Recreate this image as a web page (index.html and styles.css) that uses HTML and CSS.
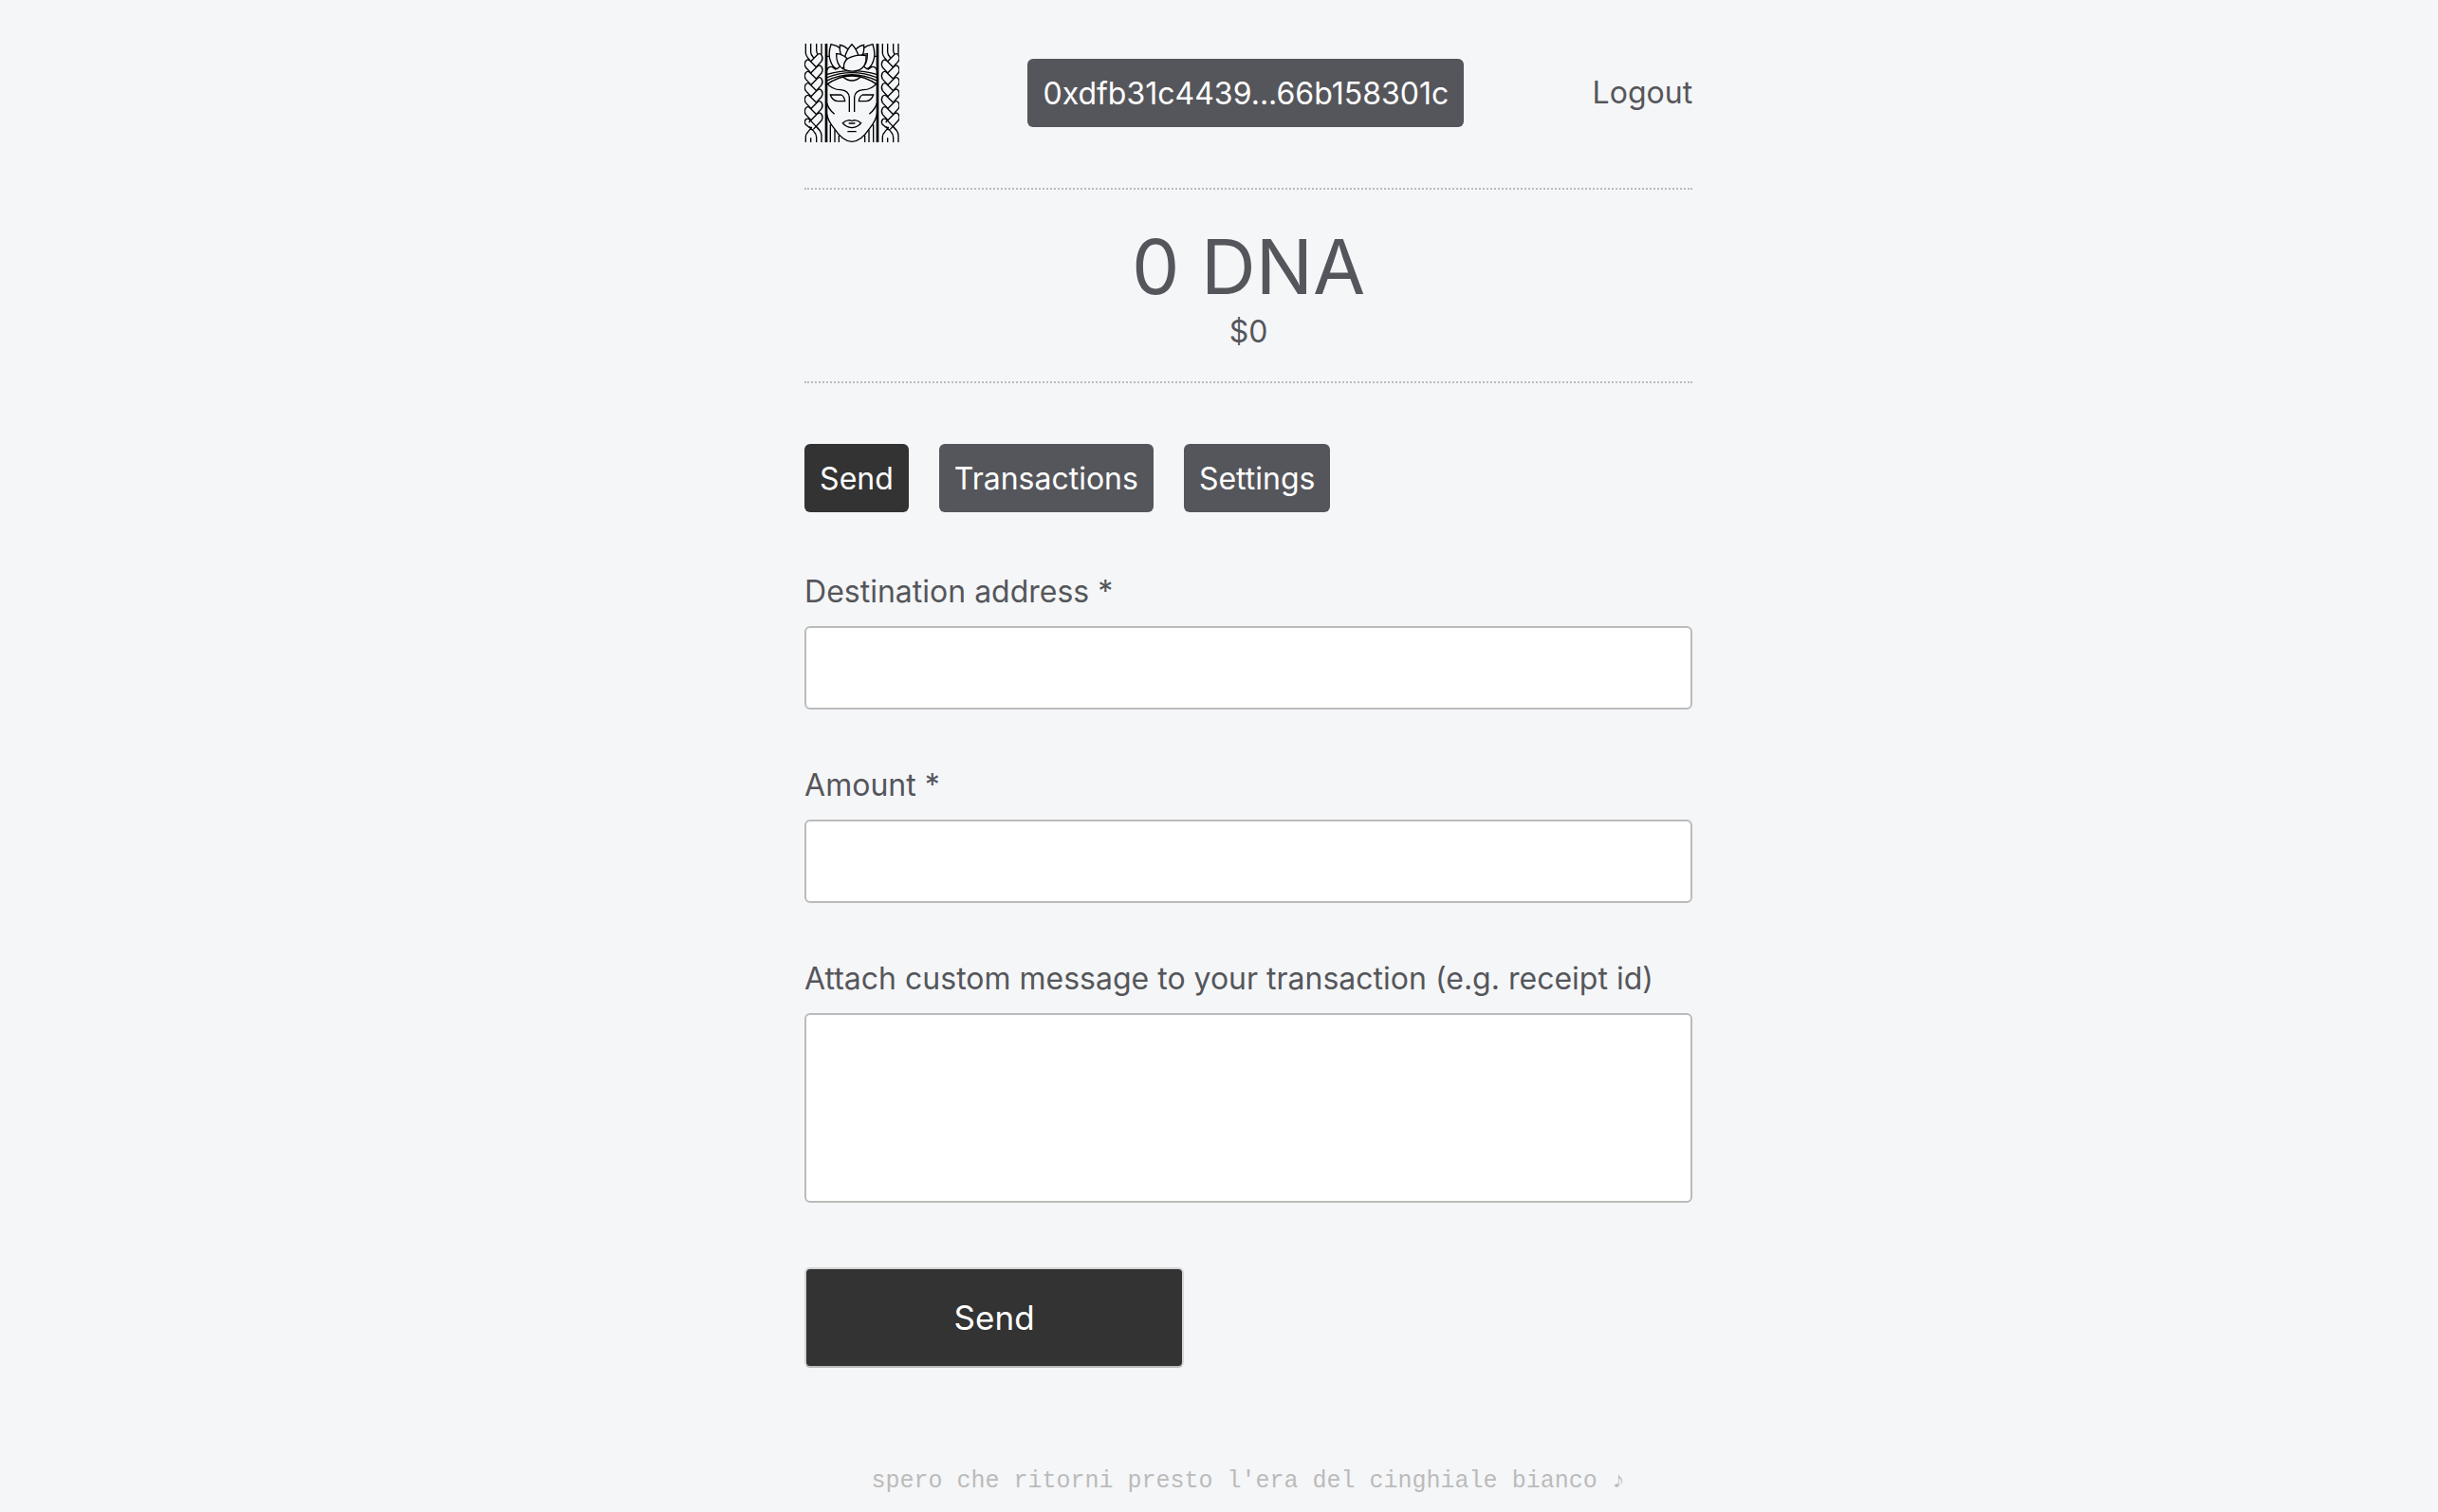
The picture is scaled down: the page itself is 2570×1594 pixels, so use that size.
FILE: index.html
```html
<!DOCTYPE html>
<html lang="en">
<head>
<meta charset="utf-8">
<meta name="viewport" content="width=device-width, initial-scale=1">
<title>Wallet</title>
<link rel="stylesheet" href="styles.css">
</head>
<body>
<main class="wallet">
  <header class="topbar">
    <a class="logo" href="#" aria-label="Home">
      <svg class="logo-art" viewBox="24 18 300 312" fill="none" stroke="#000" stroke-width="4" aria-hidden="true">
        <defs>
          <path id="link-left" fill="#f5f6f8" d="M54 42L28 14Q22 4 28 -6Q34 -14 42 -6L68 20"/>
          <path id="link-right" fill="#f5f6f8" d="M52 42L78 14Q84 4 78 -6Q72 -14 64 -6L38 20"/>
          <g id="braid">
            <path d="M28 18V48Q28 54 34 62L42 72M44 18V44Q44 52 51 60L59 70M62 18V40Q62 46 66 52L72 60M78 18V48Q78 54 72 60"/>
            <path d="M28 330V312Q28 304 36 296L60 268M44 330V316M62 330V314Q62 304 54 296L40 280M78 330V308Q78 300 72 292L53 270"/>
            <use href="#link-right" y="60"/>
            <use href="#link-left" y="79"/>
            <use href="#link-right" y="97"/>
            <use href="#link-left" y="116"/>
            <use href="#link-right" y="135"/>
            <use href="#link-left" y="153"/>
            <use href="#link-right" y="172"/>
            <use href="#link-left" y="191"/>
            <use href="#link-right" y="210"/>
            <use href="#link-left" y="228"/>
            <use href="#link-right" y="247"/>
            <path d="M50 292L28 274Q22 266 28 258Q34 252 42 260L72 292"/>
          </g>
        </defs>
        <use href="#braid"/>
        <use href="#braid" x="243"/>
        <path d="M91 18V330M95 18V330M253 18V330M257 18V330"/>
        <path d="M94 58H103M244 58H254"/>
        <path d="M94 104Q100 88 112 92L124 100M254 104Q248 88 236 92L224 100"/>
        <path d="M93 116Q174 92 255 116M93 126Q174 94 255 126M93 136Q174 96 255 136M93 148Q174 92 255 148"/>
        <g fill="#f5f6f8">
          <path d="M126 98Q112 92 106 72Q98 50 108 20Q126 24 140 34L150 80ZM222 98Q236 92 242 72Q250 50 240 20Q222 24 208 34L198 80Z"/>
          <path d="M140 56Q134 36 136 22Q150 24 162 36V70ZM208 56Q214 36 212 22Q198 24 186 36V70Z"/>
          <path d="M152 60Q158 36 174 20Q190 36 196 60L174 90Z"/>
          <path d="M146 98Q124 84 125 50Q142 50 158 64ZM202 98Q224 84 223 50Q212 50 200 56Z"/>
          <path d="M150 100Q142 68 178 58Q198 52 219 56Q222 90 196 102Q174 110 150 100Z"/>
        </g>
        <path d="M145 122Q174 148 203 122"/>
        <path d="M94 142Q112 164 138 164Q164 166 166 188V234M254 142Q236 164 210 164Q184 166 182 188V234"/>
        <path d="M106 180H140Q150 184 152 200H128Q112 198 106 180ZM242 180H208Q198 184 196 200H220Q236 198 242 180Z"/>
        <path d="M94 204Q100 226 119 241M254 204Q248 226 229 241"/>
        <path d="M94 238Q98 262 118 286Q146 328 174 328Q202 328 230 286Q250 262 254 238"/>
        <path d="M145 269Q154 261 166 260Q174 264 182 260Q194 261 203 269Q194 282 174 284Q154 282 145 269ZM164 270H184M160 296H188"/>
        <path d="M106 274V330M120 290V330M133 308V330M215 308V330M228 290V330M242 274V330"/>
      </svg>
    </a>
    <button class="chip" type="button">0xdfb31c4439...66b158301c</button>
    <a class="logout" href="#">Logout</a>
  </header>
  <section class="balance">
    <div class="balance-amount">0 DNA</div>
    <div class="balance-fiat">$0</div>
  </section>
  <nav class="tabs">
    <button class="chip chip-active" type="button">Send</button>
    <button class="chip" type="button">Transactions</button>
    <button class="chip" type="button">Settings</button>
  </nav>
  <form class="send-form">
    <div class="field">
      <label for="destination">Destination address *</label>
      <input class="control" id="destination" type="text" required>
    </div>
    <div class="field">
      <label for="amount">Amount *</label>
      <input class="control" id="amount" type="text" required>
    </div>
    <div class="field">
      <label for="message">Attach custom message to your transaction (e.g. receipt id)</label>
      <textarea class="control control-area" id="message"></textarea>
    </div>
    <button class="submit" type="submit">Send</button>
  </form>
  <footer class="footer">spero che ritorni presto l'era del cinghiale bianco ♪</footer>
</main>
</body>
</html>
```
FILE: styles.css
```css
* { box-sizing: border-box; }

body {
  margin: 0;
  background: #f5f6f8;
  color: #55565b;
  font-family: Inter, "Liberation Sans", sans-serif;
  font-size: 32px;
  line-height: 40px;
}

button, input, textarea { font: inherit; }

.wallet {
  max-width: 936px;
  margin-left: 33%;
}

.topbar {
  display: flex;
  align-items: center;
  justify-content: space-between;
  padding: 46px 0 48px;
  border-bottom: 2px dotted #bbb;
}

.logo, .logo-art { display: block; }
.logo-art { width: 100px; height: 104px; }

.chip {
  padding: 17px 16px 15px;
  border: 0;
  border-radius: 6px;
  background: #55565b;
  color: #fff;
}
.chip-active { background: #333; }

.logout { color: inherit; text-decoration: none; }

.balance {
  padding: 32px 0;
  border-bottom: 2px dotted #bbb;
  text-align: center;
}
.balance-amount { font-size: 80px; line-height: 98px; }

.tabs {
  display: flex;
  gap: 32px;
  padding: 64px 0;
}

.send-form {
  display: flex;
  flex-direction: column;
  align-items: flex-start;
  gap: 60px;
}

.field {
  display: flex;
  flex-direction: column;
  gap: 16px;
  width: 100%;
}

.control {
  width: 100%;
  height: 88px;
  padding: 16px;
  border: 2px solid #bbb;
  border-radius: 6px;
  background: #fff;
  color: inherit;
}
.control-area { display: block; height: 200px; resize: none; }

.submit {
  width: 400px;
  margin-top: 8px;
  padding: 31px 32px;
  border: 2px solid #d5d5d5;
  border-bottom-color: #bbb;
  border-radius: 6px;
  background: #333;
  color: #fff;
  font-size: 35px;
}

.footer {
  padding: 100px 0 12px;
  color: #bbb;
  font-family: "Liberation Mono", monospace;
  font-size: 25px;
  text-align: center;
}
```
